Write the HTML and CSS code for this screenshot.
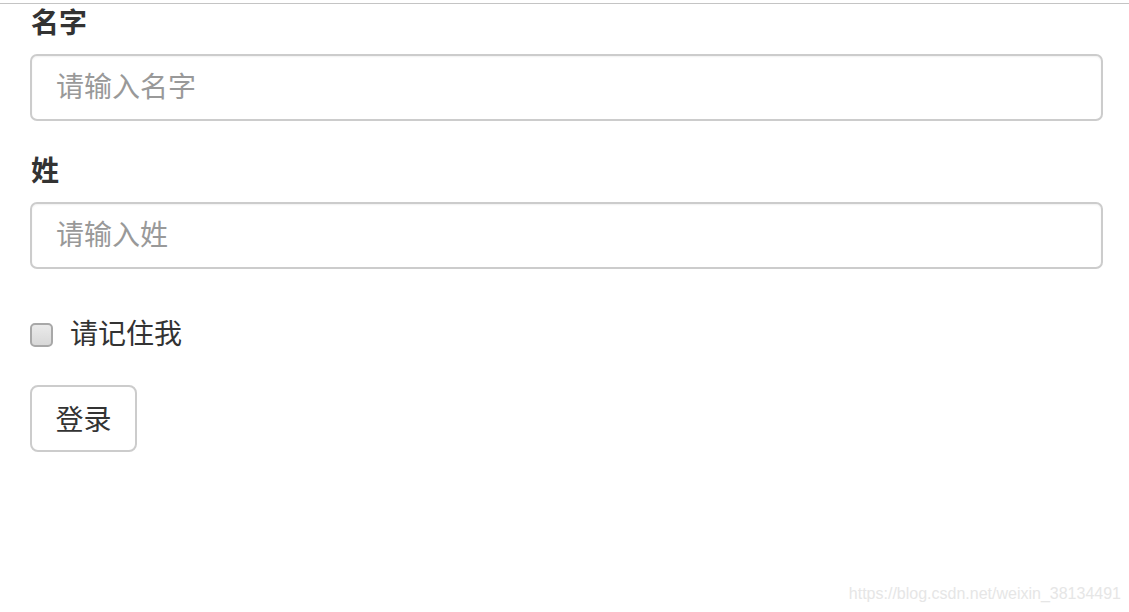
FILE: index.html
```html
<!DOCTYPE html>
<html lang="zh-CN">
<head>
    <meta charset="UTF-8">
    <title>登录</title>
    <link rel="stylesheet" href="styles.css">
</head>
<body>
    <form class="login-form">
        <div class="form-group">
            <label class="form-label" for="firstname">名字</label>
            <input class="form-control" type="text" id="firstname" placeholder="请输入名字">
        </div>
        <div class="form-group">
            <label class="form-label" for="lastname">姓</label>
            <input class="form-control" type="text" id="lastname" placeholder="请输入姓">
        </div>
        <label class="checkbox">
            <input type="checkbox"> 请记住我
        </label>
        <button type="submit" class="btn">登录</button>
    </form>

    <div class="watermark">https://blog.csdn.net/weixin_38134491</div>
</body>
</html>
```

FILE: styles.css
```css
* {
    box-sizing: border-box;
}

html, body {
    height: 100%;
}

body {
    margin: 0;
    padding-top: 3px;
    font-family: "Liberation Sans", "Noto Sans CJK SC", sans-serif;
    color: #333;
    background: #fff;
    position: relative;
}

.login-form {
    border-top: 1px solid #c4c4c4;
    padding: 0 26px 0 30px;
}

.form-group {
    display: flex;
    flex-direction: column;
}

.form-group + .form-group {
    margin-top: 31px;
}

.form-label {
    font-size: 28px;
    line-height: 40px;
    font-weight: bold;
    margin-bottom: 10px;
    padding-left: 1px;
}

.form-control {
    height: 67px;
    padding: 0 24px;
    font-family: inherit;
    font-size: 28px;
    color: #555;
    border: 2px solid #ccc;
    border-radius: 7px;
    box-shadow: inset 0 1px 2px rgba(0, 0, 0, 0.06);
    outline: none;
}

.form-control::placeholder {
    color: #999;
}

.checkbox {
    display: flex;
    align-items: center;
    margin-top: 46px;
    font-size: 28px;
    line-height: 40px;
}

.checkbox input {
    appearance: none;
    -webkit-appearance: none;
    width: 23px;
    height: 24px;
    margin: 0 17px 0 0;
    border: 2px solid #a8a8a8;
    border-radius: 5px;
    background: linear-gradient(#eaeaea, #d8d8d8);
}

.btn {
    display: block;
    margin-top: 30px;
    width: 107px;
    height: 67px;
    padding: 0 0 2px;
    font-family: inherit;
    font-size: 28px;
    color: #333;
    background: #fff;
    border: 2px solid #ccc;
    border-radius: 8px;
    cursor: pointer;
}

.watermark {
    position: absolute;
    right: 8px;
    bottom: 9px;
    font-size: 16px;
    color: #e6e6e6;
}
```
